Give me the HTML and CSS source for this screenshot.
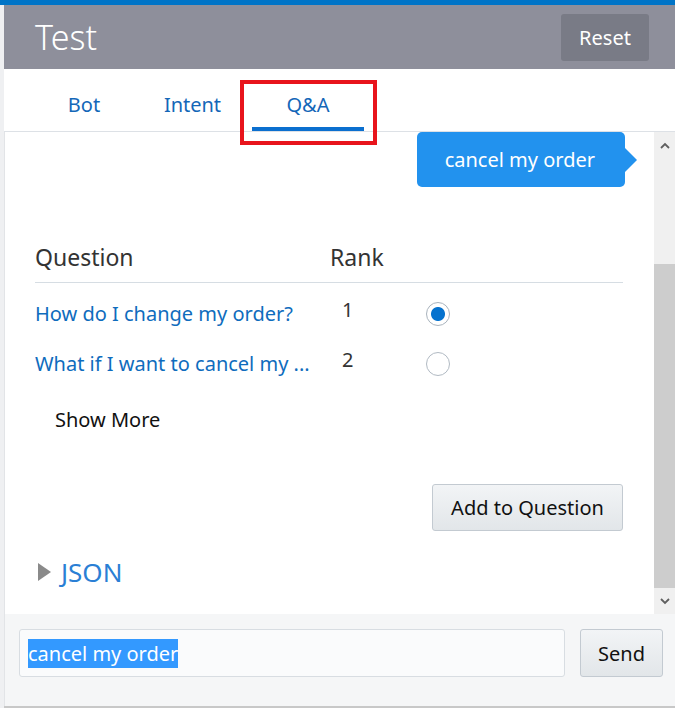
FILE: index.html
```html
<!DOCTYPE html>
<html lang="en">
<head>
<meta charset="utf-8">
<title>Test</title>
<link rel="stylesheet" href="styles.css">
</head>
<body>
<div class="topbar"></div>
<div class="main">
  <div class="gutter"></div>
  <div class="panel">
    <header class="header">
      <h1 class="title">Test</h1>
      <button class="reset" type="button">Reset</button>
    </header>
    <nav class="tabs">
      <a class="tab tab-bot">Bot</a>
      <a class="tab tab-intent">Intent</a>
      <a class="tab tab-qa active">Q&amp;A</a>
      <span class="callout"></span>
    </nav>
    <div class="body">
      <div class="content">
        <div class="bubble-row"><div class="bubble">cancel my order</div></div>
        <div class="qa-head">
          <span>Question</span>
          <span>Rank</span>
          <span></span>
        </div>
        <div class="qa-rows">
          <div class="qa-row">
            <a class="qa-link">How do I change my order?</a>
            <span class="rank">1</span>
            <span class="radio checked"></span>
          </div>
          <div class="qa-row">
            <a class="qa-link">What if I want to cancel my ...</a>
            <span class="rank">2</span>
            <span class="radio"></span>
          </div>
        </div>
        <div class="show-more">Show More</div>
        <div class="actions"><button class="btn add-btn" type="button">Add to Question</button></div>
        <div class="json"><span class="caret"></span><span class="json-label">JSON</span></div>
      </div>
      <div class="scrollbar">
        <div class="sb-btn"><svg width="10" height="7" viewBox="0 0 10 7"><polyline points="1,6 5,2 9,6" fill="none" stroke="#5f5f5f" stroke-width="1.8"/></svg></div>
        <div class="sb-track">
          <div class="sb-space"></div>
          <div class="sb-thumb"></div>
        </div>
        <div class="sb-btn"><svg width="10" height="7" viewBox="0 0 10 7"><polyline points="1,1 5,5 9,1" fill="none" stroke="#5f5f5f" stroke-width="1.8"/></svg></div>
      </div>
    </div>
    <footer class="footer">
      <div class="input"><span class="selected">cancel my order</span></div>
      <button class="btn send-btn" type="button">Send</button>
    </footer>
    <div class="bottom-line"></div>
  </div>
</div>
</body>
</html>
```
FILE: styles.css
```css
* { box-sizing: border-box; }
html, body { margin: 0; padding: 0; }
body {
  width: 675px;
  height: 708px;
  overflow: hidden;
  background: #ffffff;
  font-family: "Noto Sans", "Open Sans", sans-serif;
  color: #222;
}
.topbar { height: 5px; background: #0074c7; }
.main { display: flex; height: 703px; }
.gutter { width: 4px; background: #eff0f2; }
.panel { flex: 1; display: flex; flex-direction: column; min-width: 0; }

.header {
  height: 64px;
  background: #8e8f9b;
  display: flex;
  align-items: center;
  justify-content: space-between;
  padding: 0 26px 0 31px;
}
.title { margin: 0; font-size: 34px; font-weight: 300; color: #fff; line-height: 40px; }
.reset {
  width: 88px; height: 47px;
  background: #797b86; border: none; border-radius: 3px;
  color: #fff; font-family: inherit; font-size: 20px;
}

.tabs {
  position: relative;
  height: 63px;
  display: flex;
  padding-left: 31px;
  border-bottom: 1px solid #dde1e6;
}
.tab {
  padding: 22px 0 8px;
  text-align: center;
  font-size: 20px;
  line-height: 28px;
  color: #1467b8;
  border-bottom: 4px solid transparent;
  height: 62px;
}
.tab-bot { width: 98px; }
.tab-intent { width: 119px; }
.tab-qa { width: 112px; }
.tab.active { border-bottom-color: #0b6fcf; }
.callout {
  position: absolute;
  left: 236px; top: 11px;
  width: 137px; height: 65px;
  border: 4px solid #e8141c;
  z-index: 5;
}

.body { height: 482px; display: flex; border-left: 1px solid #e2e4e7; }
.content { flex: 1; padding: 0 31px 0 30px; }
.bubble-row { display: flex; justify-content: flex-end; margin-right: -2px; }
.bubble {
  position: relative;
  background: #2292ee;
  color: #fff;
  font-size: 20px;
  line-height: 27px;
  padding: 14px 30px 14px 28px;
  border-radius: 5px;
}
.bubble::after {
  content: "";
  position: absolute;
  right: -12px; top: 16px;
  border-top: 12px solid transparent;
  border-bottom: 12px solid transparent;
  border-left: 12px solid #2292ee;
}

.qa-head, .qa-row {
  display: grid;
  grid-template-columns: 295px 96px 1fr;
  align-items: center;
}
.qa-head {
  margin-top: 55px;
  font-size: 23px;
  line-height: 30px;
  color: #333;
  padding-bottom: 10px;
  border-bottom: 1px solid #d6dde3;
}
.qa-rows { padding-top: 6px; }
.qa-row { padding: 11px 0; font-size: 20px; line-height: 28px; }
.qa-link { color: #0f6cbd; white-space: nowrap; overflow: hidden; }
.rank { color: #333; padding-left: 12px; margin-top: -8px; }
.radio {
  width: 24px; height: 24px;
  border: 1.5px solid #b1bac3;
  border-radius: 50%;
  background: #fff;
}
.radio.checked {
  border-color: #a9b3bd;
  background: radial-gradient(circle, #0572ce 0 6.5px, #fff 7.5px);
}

.show-more { margin: 17px 0 0 20px; font-size: 20px; line-height: 28px; color: #111; }
.actions { display: flex; justify-content: flex-end; margin-top: 50px; }
.btn {
  height: 47px;
  background: linear-gradient(#f2f4f6, #e2e6e9);
  border: 1px solid #c3cad1;
  border-radius: 3px;
  font-family: inherit;
  font-size: 20px;
  color: #111;
}
.add-btn { width: 191px; padding: 0 17px; }
.json { margin-top: 24px; display: flex; align-items: center; height: 34px; }
.caret {
  margin-left: 3px;
  width: 0; height: 0;
  border-top: 9px solid transparent;
  border-bottom: 9px solid transparent;
  border-left: 13px solid #8a8a8a;
  margin-right: 10px;
}
.json-label { font-size: 26px; line-height: 34px; color: #2a7fd5; }

.scrollbar { width: 21px; display: flex; flex-direction: column; background: #f0f0f0; }
.sb-btn { height: 26px; display: flex; align-items: center; justify-content: center; }
.sb-track { flex: 1; display: flex; flex-direction: column; }
.sb-space { height: 106px; }
.sb-thumb { flex: 1; background: #cdcdcd; }

.footer {
  height: 92px;
  background: #f5f6f7;
  border-left: 1px solid #e2e4e7;
  display: flex;
  align-items: flex-start;
  gap: 15px;
  padding: 15px 12px 0 14px;
}
.input {
  flex: 1;
  height: 48px;
  background: #fafbfc;
  border: 1px solid #d8dde2;
  border-radius: 3px;
  padding: 0 8px;
  display: flex;
  align-items: center;
}
.selected { background: #3399ff; color: #fff; font-size: 20px; line-height: 29px; }
.send-btn { width: 83px; height: 48px; }
.bottom-line { height: 2px; background: #c8c8c8; }
```
